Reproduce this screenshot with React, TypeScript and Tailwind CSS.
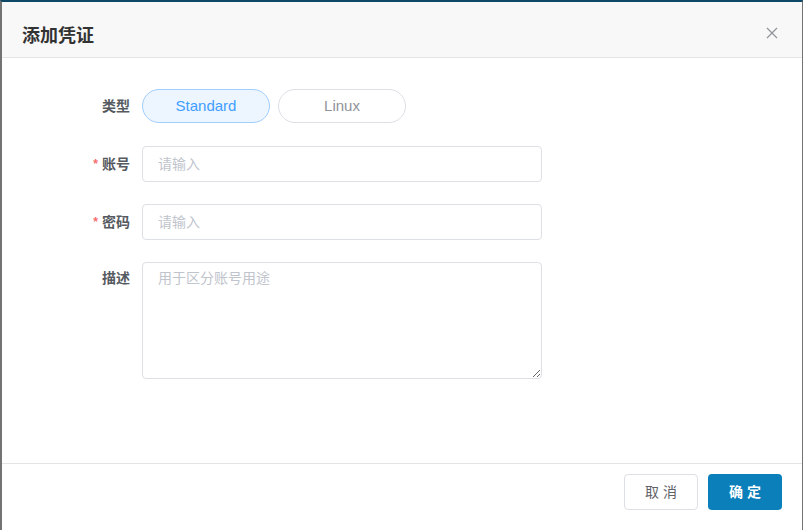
import React, { FC } from "react";

const font = { fontFamily: '"Liberation Sans", "Noto Sans CJK SC", sans-serif' };

const Label: FC<{ text: string; required?: boolean; top?: boolean }> = ({ text, required, top }) => (
  <div
    className={`w-[140px] shrink-0 pr-3 flex justify-end text-sm font-semibold text-[#555a60] ${
      top ? "items-start pt-[6px]" : "items-center"
    }`}
  >
    {required && <span className="text-[#f56c6c] mr-1 text-xs">*</span>}
    <span>{text}</span>
  </div>
);

const App: FC = () => {
  return (
    <div
      className="w-[803px] h-[530px] flex flex-col bg-white border-t-2 border-t-[#0f4866] border-l-2 border-l-[#737373] border-r border-r-[#737373] overflow-hidden"
      style={font}
    >
      <div className="h-[56px] shrink-0 bg-[#f8f8f8] border-b border-[#e4e4e4] flex items-start justify-between pl-5 pr-6 pt-[22px]">
        <h2 className="text-lg leading-6 font-semibold text-[#333]">添加凭证</h2>
        <svg width="12" height="12" viewBox="0 0 12 12" className="mt-[3px]">
          <path d="M1 1L11 11M11 1L1 11" stroke="#909399" strokeWidth="1.2" />
        </svg>
      </div>

      <div className="flex-1 pt-[31px]">
        <div className="flex h-[34px]">
          <Label text="类型" />
          <div className="flex gap-2">
            <button className="w-[128px] h-[34px] pt-px rounded-full border border-[#a0cefd] bg-[#edf5ff] text-[15px] text-[#409eff]">
              Standard
            </button>
            <button className="w-[128px] h-[34px] pt-px rounded-full border border-[#dcdfe6] bg-white text-[15px] text-[#909399]">
              Linux
            </button>
          </div>
        </div>

        <div className="flex h-[36px] mt-[23px]">
          <Label text="账号" required />
          <input
            className="w-[400px] h-[36px] rounded border border-[#dcdfe6] px-[15px] text-sm outline-none placeholder:text-[#c0c4cc]"
            placeholder="请输入"
          />
        </div>

        <div className="flex h-[36px] mt-[22px]">
          <Label text="密码" required />
          <input
            type="password"
            className="w-[400px] h-[36px] rounded border border-[#dcdfe6] px-[15px] text-sm outline-none placeholder:text-[#c0c4cc]"
            placeholder="请输入"
          />
        </div>

        <div className="flex mt-[22px]">
          <Label text="描述" top />
          <textarea
            className="w-[400px] h-[117px] rounded border border-[#dcdfe6] px-[15px] py-[3px] text-sm leading-6 outline-none placeholder:text-[#c0c4cc]"
            placeholder="用于区分账号用途"
          />
        </div>
      </div>

      <div className="h-[67px] shrink-0 border-t border-[#e4e4e4] flex justify-end items-start gap-[10px] pt-[10px] pr-5">
        <button className="w-[74px] h-[36px] rounded border border-[#dcdfe6] bg-white text-sm text-[#606266]">
          取 消
        </button>
        <button className="w-[74px] h-[36px] rounded bg-[#0a7fba] text-sm font-semibold text-white">
          确 定
        </button>
      </div>
    </div>
  );
};

export default App;
